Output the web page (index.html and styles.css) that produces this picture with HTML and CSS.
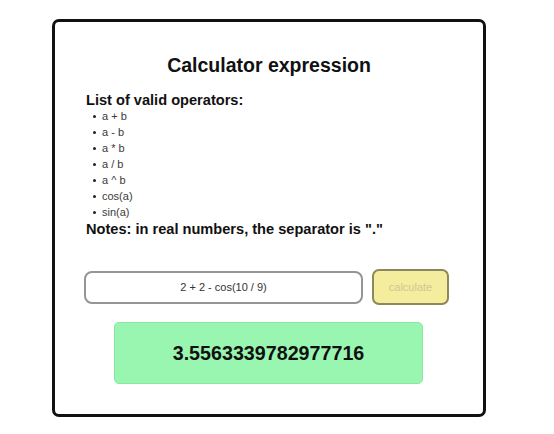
FILE: index.html
```html
<!DOCTYPE html>
<html>
<head>
<meta charset="utf-8">
<link rel="stylesheet" href="styles.css">
</head>
<body>
<div class="card">
  <h1 class="title">Calculator expression</h1>
  <h2 class="heading">List of valid operators:</h2>
  <ul class="ops">
    <li>a + b</li>
    <li>a - b</li>
    <li>a * b</li>
    <li>a / b</li>
    <li>a ^ b</li>
    <li>cos(a)</li>
    <li>sin(a)</li>
  </ul>
  <h2 class="heading">Notes: in real numbers, the separator is "."</h2>
  <div class="row">
    <input class="expr" type="text" value="2 + 2 - cos(10 / 9)">
    <button class="calc" disabled>calculate</button>
  </div>
  <div class="result">3.5563339782977716</div>
</div>
</body>
</html>
```
FILE: styles.css
```css
html, body {
  margin: 0;
  padding: 0;
  background: #ffffff;
}
body {
  font-family: "Liberation Sans", Arial, sans-serif;
  color: #111;
  padding: 19px 0 0 52px;
}
.card {
  box-sizing: border-box;
  width: 434px;
  height: 398px;
  border: 3px solid #111;
  border-radius: 7px;
  padding: 31px 34px 0 31px;
  display: flex;
  flex-direction: column;
}
.title {
  margin: 0;
  font-size: 19.5px;
  line-height: 24px;
  font-weight: bold;
  text-align: center;
  padding-left: 3px;
}
.heading {
  margin: 15px 0 0 0;
  font-size: 14.6px;
  line-height: 16px;
  font-weight: bold;
}
.ops {
  margin: 0;
  padding: 0 0 0 7px;
  list-style: none;
  font-size: 11px;
  line-height: 16px;
  color: #3a3a3a;
}
.ops li::before {
  content: "";
  display: inline-block;
  width: 3px;
  height: 3px;
  border-radius: 50%;
  background: #222;
  margin-right: 6px;
  vertical-align: 2px;
}
.ops + .heading {
  margin-top: 1px;
}
.row {
  margin-top: 32px;
  display: flex;
  align-items: center;
  gap: 9px;
  margin-left: -2px;
}
.expr {
  box-sizing: border-box;
  width: 279px;
  height: 33px;
  border: 2px solid #959595;
  border-radius: 8px;
  text-align: center;
  font-family: "Liberation Sans", Arial, sans-serif;
  font-size: 11px;
  color: #333;
  background: #fff;
  padding: 0 6px;
}
.calc {
  box-sizing: border-box;
  width: 77px;
  height: 36px;
  background: #f3ed9d;
  border: 2px solid #8e875a;
  border-radius: 7px;
  font-family: "Liberation Sans", Arial, sans-serif;
  font-size: 11px;
  color: #cfc893;
  padding: 0;
}
.result {
  box-sizing: border-box;
  margin: 17px 0 0 28px;
  width: 309px;
  height: 62px;
  background: #99f6b0;
  border: 1px solid #86e89f;
  border-radius: 5px;
  display: flex;
  align-items: center;
  justify-content: center;
  font-size: 19.7px;
  font-weight: bold;
  color: #111;
}
```
